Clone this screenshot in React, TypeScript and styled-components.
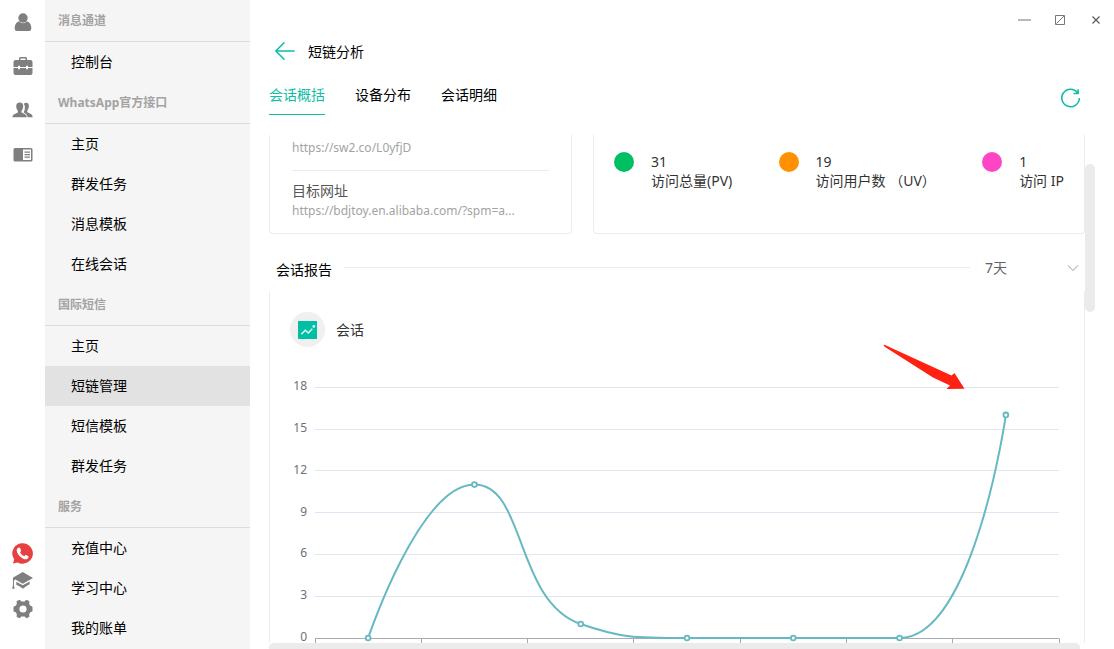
import React, { useEffect, useRef, useState } from 'react';
import styled, { createGlobalStyle } from 'styled-components';

const GlobalStyle = createGlobalStyle`
  *, *::before, *::after { box-sizing: border-box; }
  body {
    margin: 0;
    background: #fff;
    color: #000;
    font-family: "Noto Sans", "Noto Sans CJK SC", sans-serif;
    font-size: 14px;
    line-height: 20px;
  }
  button, select { font: inherit; color: inherit; }
`;

const Shell = styled.div`
  display: flex;
  height: 100vh;
  overflow: hidden;
`;

const Rail = styled.nav`
  flex: 0 0 45px;
  display: flex;
  flex-direction: column;
  justify-content: space-between;
  padding: 12px 0 30px;
`;

const RailGroup = styled.div<{ $gap: number }>`
  display: flex;
  flex-direction: column;
  align-items: center;
  gap: ${(p) => p.$gap}px;
`;

const IconButton = styled.button<{ $width?: number; $height?: number }>`
  display: flex;
  align-items: center;
  justify-content: center;
  width: ${(p) => p.$width ?? 21}px;
  height: ${(p) => p.$height ?? 20}px;
  padding: 0;
  border: 0;
  background: none;
  cursor: pointer;
`;

const Sidebar = styled.nav`
  flex: 0 0 205px;
  background: #f5f5f5;
  overflow: hidden;
`;

const SectionTitle = styled.h2`
  margin: 0;
  height: 42px;
  padding-left: 13px;
  border-bottom: 1px solid #dcdcdc;
  color: #a3a3a3;
  font-size: 12px;
  font-weight: 700;
  line-height: 42px;
`;

const MenuLink = styled.a<{ $active: boolean }>`
  display: block;
  height: 40px;
  padding-left: 26px;
  background: ${(p) => (p.$active ? '#e2e2e2' : 'transparent')};
  color: #000;
  line-height: 40px;
  text-decoration: none;
`;

const Main = styled.main`
  flex: 1;
  min-width: 0;
  display: flex;
  flex-direction: column;
`;

const WindowBar = styled.div`
  display: flex;
  justify-content: flex-end;
  height: 40px;
`;

const PageHeader = styled.header`
  display: flex;
  align-items: center;
  gap: 13px;
  height: 22px;
  padding-left: 24px;
`;

const PageTitle = styled.h1`
  margin: 0;
  padding-top: 2px;
  font-size: 14px;
  font-weight: 400;
`;

const TabRow = styled.div`
  display: flex;
  align-items: flex-end;
  justify-content: space-between;
  margin: 14px 33px 20px 19px;
`;

const Tabs = styled.div`
  display: flex;
  gap: 30px;
`;

const Tab = styled.button<{ $active: boolean }>`
  height: 39px;
  padding: 0;
  border: 0;
  border-bottom: 1px solid ${(p) => (p.$active ? '#0dbda4' : 'transparent')};
  background: none;
  color: ${(p) => (p.$active ? '#0dbda4' : '#000')};
  cursor: pointer;
`;

const ScrollArea = styled.div`
  flex: 1;
  min-height: 0;
  display: grid;
  grid-template-columns: minmax(0, 1fr) 10px;
  grid-template-rows: minmax(0, 1fr) 6px;
  margin: 0 19px;
`;

const ScrollContent = styled.div`
  grid-area: 1 / 1 / 3 / 2;
  overflow: hidden;
`;

const VerticalThumb = styled.div`
  grid-area: 1 / 2 / 2 / 3;
  height: 148px;
  margin-top: 29px;
  border-radius: 5px;
  background: #ebebeb;
`;

const HorizontalTrack = styled.div`
  grid-area: 2 / 1 / 3 / 2;
  z-index: 1;
  padding-right: 5px;
  background: #fff;
`;

const HorizontalThumb = styled.div`
  height: 6px;
  border-radius: 5px 5px 0 0;
  background: #ebebeb;
`;

const Cards = styled.div`
  display: flex;
  gap: 21px;
`;

const Card = styled.section`
  height: 99px;
  border: 1px solid #ebebf2;
  border-top: 0;
  border-radius: 0 0 4px 4px;
`;

const LinkCard = styled(Card)`
  flex: 0 0 303px;
  padding: 3px 22px 0;
`;

const StatCard = styled(Card)`
  flex: 1;
  display: flex;
  justify-content: space-between;
  align-items: flex-start;
  padding: 17px 20px 0;
`;

const Url = styled.a`
  display: block;
  color: #a3a3a3;
  font-size: 12px;
  text-decoration: none;
`;

const LinkTarget = styled.div`
  margin-top: 12px;
  padding-top: 10px;
  border-top: 1px solid #ebebeb;
`;

const FieldName = styled.div`
  color: #555;
`;

const Stat = styled.div`
  display: flex;
  gap: 17px;
  color: #333;
  line-height: 19px;
`;

const Dot = styled.span<{ $color: string }>`
  width: 20px;
  height: 20px;
  border-radius: 50%;
  background: ${(p) => p.$color};
`;

const ReportBar = styled.div`
  display: flex;
  align-items: center;
  height: 48px;
  margin-top: 9px;
  padding-left: 7px;
`;

const ReportTitle = styled.h2`
  margin: 6px 12px 0 0;
  font-size: 14px;
  font-weight: 400;
`;

const Rule = styled.div`
  flex: 1;
  height: 1px;
  background: #ebebeb;
`;

const RangeLabel = styled.label`
  position: relative;
  flex: 0 0 115px;
  color: #606266;
`;

const RangeSelect = styled.select`
  width: 100%;
  height: 32px;
  padding: 2px 28px 0 15px;
  border: 0;
  background: none;
  appearance: none;
`;

const SelectArrow = styled.svg`
  position: absolute;
  top: 11px;
  right: 6px;
  pointer-events: none;
`;

const ChartPanel = styled.section`
  position: relative;
  border: 1px solid #ebebf2;
  border-top: 0;
`;

const ChartTitle = styled.h3`
  display: flex;
  align-items: center;
  gap: 11px;
  margin: 0;
  padding: 21px 20px 20px;
  color: #333;
  font-size: 14px;
  font-weight: 400;
`;

const ChartBadge = styled.span`
  display: flex;
  align-items: center;
  justify-content: center;
  width: 35px;
  height: 35px;
  border-radius: 50%;
  background: #f0f0f0;
`;

const ChartBox = styled.div`
  height: 300px;
`;

const Plot = styled.svg`
  display: block;
  width: 100%;
  height: 300px;
`;

const AxisText = styled.text`
  fill: #6e7079;
  font-size: 12px;
  text-anchor: end;
`;

const Pointer = styled.svg`
  position: absolute;
  top: 53px;
  right: 119px;
`;

const GREY = '#7f7f7f';

const UserIcon = () => (
  <svg width="18" height="19" viewBox="0 0 18 19" fill={GREY}>
    <circle cx="9" cy="5" r="4.7" />
    <path d="M5 8.3Q9 12 13 8.3Q17.300 9.500 17.300 15.500Q17.300 18 15 18H3Q.7 18 .7 15.500Q.7 9.500 5 8.300Z" />
  </svg>
);

const ToolboxIcon = () => (
  <svg width="20" height="20" viewBox="0 0 20 20" fill={GREY}>
    <path fillRule="evenodd" d="M6 4V2.500Q6 1 7.500 1h5Q14 1 14 2.500V4h3.500Q19.500 4 19.500 6v5H15V9.700h-2V11H7V9.700H5V11H.5V6Q.5 4 2.500 4ZM7.500 4h5V2.500h-5Z" />
    <path d="M.5 12H5v1.300h2V12h6v1.300h2V12h4.500v5Q19.500 19 17.500 19h-15Q.5 19 .5 17Z" />
  </svg>
);

const UsersIcon = () => (
  <svg width="21" height="18" viewBox="0 0 21 18" fill={GREY}>
    <path d="M12.800 2.100Q14.500 1.200 16 2.300Q17.300 3.500 16.700 6.500Q16.300 8.500 15.300 9.600V11.300L18.500 12.800Q20.600 13.700 20.700 16.300H15.700Q15.400 13.300 13 12.300L11.500 11.500Q13.200 9 12.900 6Q12.800 4 11.800 3Z" />
    <path d="M7.700 1.400Q11.400 1.400 11.200 5.500Q11 8.500 9.500 10V11.600L13 13.200Q14.800 14 14.900 16.300H.3Q.5 14 2.200 13.200L5.900 11.600V10Q4.400 8.500 4.200 5.500Q4.100 1.400 7.700 1.400Z" />
  </svg>
);

const ReaderIcon = () => (
  <svg width="20" height="16" viewBox="0 0 20 16" fill={GREY}>
    <path fillRule="evenodd" d="M2 2h16q1.500 0 1.500 1.500v10.500Q19.500 15.500 18 15.500H2Q.5 15.500 .5 14v-10.500Q.5 2 2 2ZM10 3.500v10.500h8v-10.500Z" />
    <path d="M11.500 5.500H17v1.200h-5.500ZM11.500 8H17v1.200h-5.500ZM11.500 10.500H17v1.200h-5.500Z" />
  </svg>
);

const PhoneIcon = () => (
  <svg width="21" height="21" viewBox="0 0 21 21">
    <path fill="#e83f3f" d="M10.500.3A10.200 10.200 0 1 1 5.700 19.400L1 20.600L2.200 16.400A10.200 10.200 0 0 1 10.500.3Z" />
    <path fill="#fff" d="M5.500 5.200Q7.300 3.700 8 5L9 7.200Q9.300 8 8 9.200Q9.500 12 12.300 13.200Q13.500 11.600 14.200 12L16.400 13.200Q17.200 14 15.700 15.500Q13.800 17.200 10.700 15.500Q6.500 13.200 5 9.300Q4 6.700 5.500 5.200Z" />
  </svg>
);

const CapIcon = () => (
  <svg width="22" height="20" viewBox="0 0 22 20" fill={GREY}>
    <path d="M11.300.5L22 6.800L11.300 13L3.500 8.500L2 9.600V14.500L2.800 18H.1L1 14.500V7L.8 6.700Z" />
    <path d="M4.500 10.700L11.300 14.500L18.500 10.500V13.500Q15.500 15 11.500 18Q7.500 15 4.500 14Z" />
  </svg>
);

const GearIcon = () => (
  <svg width="20" height="20" viewBox="0 0 20 20" fill={GREY}>
    <path
      fillRule="evenodd"
      d="M8.300 2.600H11.700L12.700 1.200Q13.200.6 14 .9L16 2Q16.600 2.400 16.400 3.200L16.100 4.700L17.300 6.700L18.700 7.200Q19.500 7.500 19.500 8.300V11.700Q19.500 12.500 18.700 12.800L17.300 13.300L16.100 15.300L16.400 16.800Q16.600 17.600 16 18L14 19.100Q13.200 19.400 12.700 18.800L11.700 17.400H8.300L7.300 18.800Q6.800 19.400 6 19.100L4 18Q3.400 17.600 3.600 16.800L3.900 15.300L2.700 13.300L1.300 12.800Q.5 12.500 .5 11.700V8.300Q.5 7.500 1.300 7.200L2.700 6.700L3.900 4.700L3.600 3.200Q3.400 2.400 4 2L6 .9Q6.800.6 7.300 1.200ZM10 6.400A3.600 3.600 0 1 0 10 13.600A3.600 3.600 0 1 0 10 6.400Z"
    />
  </svg>
);

const BackIcon = () => (
  <svg width="23" height="20" viewBox="0 0 23 20" fill="none" stroke="#0dbda4" strokeWidth="1.700" strokeLinecap="round" strokeLinejoin="round">
    <path d="M22 10H2M11 1L2 10L11 19" />
  </svg>
);

const RefreshIcon = () => (
  <svg width="22" height="22" viewBox="0 0 22 22" fill="none" stroke="#0dbda4" strokeWidth="1.600">
    <path d="M20.300 11A9.200 9.200 0 1 1 18.300 5.200M19 1.800V6.200H14.200" />
  </svg>
);

const MinimizeIcon = () => (
  <svg width="13" height="12" viewBox="0 0 13 12">
    <path d="M0 6H13" stroke="#b9b9b9" strokeWidth="2" />
  </svg>
);

const MaximizeIcon = () => (
  <svg width="10" height="10" viewBox="0 0 10 10" fill="none" stroke="#777">
    <path d="M.5.5H9.500V9.500H.5ZM1.500 8.500L9 1" />
  </svg>
);

const CloseIcon = () => (
  <svg width="8" height="8" viewBox="0 0 8 8" stroke="#555" strokeWidth="1.100">
    <path d="M.5.5L7.500 7.500M7.500.5L.5 7.500" />
  </svg>
);

const TrendIcon = () => (
  <svg width="19" height="18" viewBox="0 0 19 18">
    <path d="M0 0H19V18H0Z" fill="#00bfa5" />
    <path d="M3.300 13.200L7.300 9.300L10.300 12L14.300 7.800" fill="none" stroke="#e3f3ec" strokeWidth="1.500" />
    <circle cx="15.800" cy="5.400" r="1.400" fill="#e3f3ec" />
  </svg>
);

const SECTIONS = [
  { title: '消息通道', items: ['控制台'] },
  { title: 'WhatsApp官方接口', items: ['主页', '群发任务', '消息模板', '在线会话'] },
  { title: '国际短信', items: ['主页', '短链管理', '短信模板', '群发任务'] },
  { title: '服务', items: ['充值中心', '学习中心', '我的账单'] },
];

const STATS = [
  { value: 31, label: '访问总量(PV)', color: '#00bf63' },
  { value: 19, label: '访问用户数 （UV）', color: '#ff9100' },
  { value: 1, label: '访问 IP', color: '#ff45c4' },
];

const TABS = ['会话概括', '设备分布', '会话明细'];
const VISITS = [0, 11, 1, 0, 0, 0, 16];
const TICKS = [18, 15, 12, 9, 6, 3, 0];

const PLOT_LEFT = 45;
const PLOT_RIGHT = 25;
const PLOT_TOP = 20;
const PLOT_HEIGHT = 251;

type Point = [number, number];

const between = (v: number, a: number, b: number) => Math.max(Math.min(v, Math.max(a, b)), Math.min(a, b));

// Bezier curve through all points; control points never overshoot their segment.
function smoothPath(pts: Point[], smooth = 0.5): string {
  let d = `M${pts[0][0]} ${pts[0][1]}`;
  let out: Point = pts[0];
  for (let i = 1; i < pts.length; i++) {
    const p = pts[i];
    const prev = pts[i - 1];
    const next = pts[i + 1];
    let cpIn: Point = p;
    let cpOut: Point = p;
    if (next) {
      const lenPrev = Math.hypot(p[0] - prev[0], p[1] - prev[1]);
      const lenNext = Math.hypot(next[0] - p[0], next[1] - p[1]);
      const ratio = lenNext / (lenNext + lenPrev);
      const axis = (k: 0 | 1): [number, number] => {
        const forward = between(p[k] + (next[k] - prev[k]) * smooth * ratio, p[k], next[k]);
        const back = between(p[k] - ((forward - p[k]) * lenPrev) / lenNext, p[k], prev[k]);
        return [back, p[k] + ((p[k] - back) * lenNext) / lenPrev];
      };
      const [inX, outX] = axis(0);
      const [inY, outY] = axis(1);
      cpIn = [inX, inY];
      cpOut = [outX, outY];
    }
    d += `C${out[0]} ${out[1]} ${cpIn[0]} ${cpIn[1]} ${p[0]} ${p[1]}`;
    out = cpOut;
  }
  return d;
}

function VisitChart() {
  const box = useRef<HTMLDivElement>(null);
  const [width, setWidth] = useState(814);

  useEffect(() => {
    if (!box.current) return;
    const observer = new ResizeObserver(([entry]) => setWidth(entry.contentRect.width));
    observer.observe(box.current);
    return () => observer.disconnect();
  }, []);

  const right = width - PLOT_RIGHT;
  const step = (right - PLOT_LEFT) / VISITS.length;
  const y = (v: number) => PLOT_TOP + PLOT_HEIGHT * (1 - v / 18);
  // Half-pixel centres keep the one-pixel lines crisp.
  const line = (v: number) => Math.round(y(v) - 0.25) + 0.5;
  const points = VISITS.map((v, i): Point => [PLOT_LEFT + step * (i + 0.5), y(v)]);

  return (
    <ChartBox ref={box}>
      <Plot role="img" aria-label="会话">
        {TICKS.map((t) => (
          <g key={t}>
            <path d={`M${PLOT_LEFT} ${line(t)}H${right}`} stroke={t ? '#e0e6f1' : '#a9abb3'} />
            <AxisText x={PLOT_LEFT - 8} y={Math.round(y(t)) + 3}>{t}</AxisText>
          </g>
        ))}
        {[...VISITS, 0].map((_, i) => (
          <path key={i} d={`M${Math.floor(PLOT_LEFT + step * i) + 0.5} ${line(0)}v5`} stroke="#a9abb3" />
        ))}
        <path d={smoothPath(points)} fill="none" stroke="#66b9c2" strokeWidth="2" />
        {points.map(([cx, cy], i) => (
          <circle key={i} cx={cx} cy={cy} r="2.400" fill="#fff" stroke="#66b9c2" strokeWidth="1.800" />
        ))}
      </Plot>
    </ChartBox>
  );
}

export default function App() {
  const [tab, setTab] = useState(TABS[0]);

  return (
    <>
      <GlobalStyle />
      <Shell>
        <Rail>
          <RailGroup $gap={24}>
            <IconButton aria-label="用户"><UserIcon /></IconButton>
            <IconButton aria-label="工具"><ToolboxIcon /></IconButton>
            <IconButton aria-label="联系人"><UsersIcon /></IconButton>
            <IconButton aria-label="阅读"><ReaderIcon /></IconButton>
          </RailGroup>
          <RailGroup $gap={8}>
            <IconButton aria-label="电话"><PhoneIcon /></IconButton>
            <IconButton aria-label="学习"><CapIcon /></IconButton>
            <IconButton aria-label="设置"><GearIcon /></IconButton>
          </RailGroup>
        </Rail>

        <Sidebar>
          {SECTIONS.map((section) => (
            <section key={section.title}>
              <SectionTitle>{section.title}</SectionTitle>
              {section.items.map((item) => (
                <MenuLink key={item} href="#" $active={item === '短链管理'}>{item}</MenuLink>
              ))}
            </section>
          ))}
        </Sidebar>

        <Main>
          <WindowBar>
            <IconButton $width={36} $height={40} aria-label="最小化"><MinimizeIcon /></IconButton>
            <IconButton $width={36} $height={40} aria-label="最大化"><MaximizeIcon /></IconButton>
            <IconButton $width={36} $height={40} aria-label="关闭"><CloseIcon /></IconButton>
          </WindowBar>

          <PageHeader>
            <IconButton aria-label="返回"><BackIcon /></IconButton>
            <PageTitle>短链分析</PageTitle>
          </PageHeader>

          <TabRow>
            <Tabs role="tablist">
              {TABS.map((name) => (
                <Tab key={name} role="tab" aria-selected={name === tab} $active={name === tab} onClick={() => setTab(name)}>
                  {name}
                </Tab>
              ))}
            </Tabs>
            <IconButton $height={34} aria-label="刷新"><RefreshIcon /></IconButton>
          </TabRow>

          <ScrollArea>
            <ScrollContent>
              <Cards>
                <LinkCard>
                  <Url href="#">https://sw2.co/L0yfjD</Url>
                  <LinkTarget>
                    <FieldName>目标网址</FieldName>
                    <Url href="#">https://bdjtoy.en.alibaba.com/?spm=a...</Url>
                  </LinkTarget>
                </LinkCard>
                <StatCard>
                  {STATS.map((s) => (
                    <Stat key={s.label}>
                      <Dot $color={s.color} />
                      <div>
                        <div>{s.value}</div>
                        <div>{s.label}</div>
                      </div>
                    </Stat>
                  ))}
                </StatCard>
              </Cards>

              <ReportBar>
                <ReportTitle>会话报告</ReportTitle>
                <Rule />
                <RangeLabel>
                  <RangeSelect aria-label="时间范围" defaultValue="7">
                    <option value="7">7天</option>
                    <option value="30">30天</option>
                  </RangeSelect>
                  <SelectArrow width="12" height="12" viewBox="0 0 12 12" fill="none" stroke="#c0c4cc" strokeWidth="1.200">
                    <path d="M1 3.500L6 8.500L11 3.500" />
                  </SelectArrow>
                </RangeLabel>
              </ReportBar>

              <ChartPanel>
                <ChartTitle>
                  <ChartBadge><TrendIcon /></ChartBadge>
                  会话
                </ChartTitle>
                <VisitChart />
                <Pointer width="82" height="46" viewBox="0 0 82 46" fill="#ff2112">
                  <path d="M.5 1.200Q1 .6 2 1L68.500 31.500L71.500 29L81.500 44.800L63.500 45L67 41.500L50 33.500L2 3Z" />
                </Pointer>
              </ChartPanel>
            </ScrollContent>
            <VerticalThumb />
            <HorizontalTrack>
              <HorizontalThumb />
            </HorizontalTrack>
          </ScrollArea>
        </Main>
      </Shell>
    </>
  );
}
